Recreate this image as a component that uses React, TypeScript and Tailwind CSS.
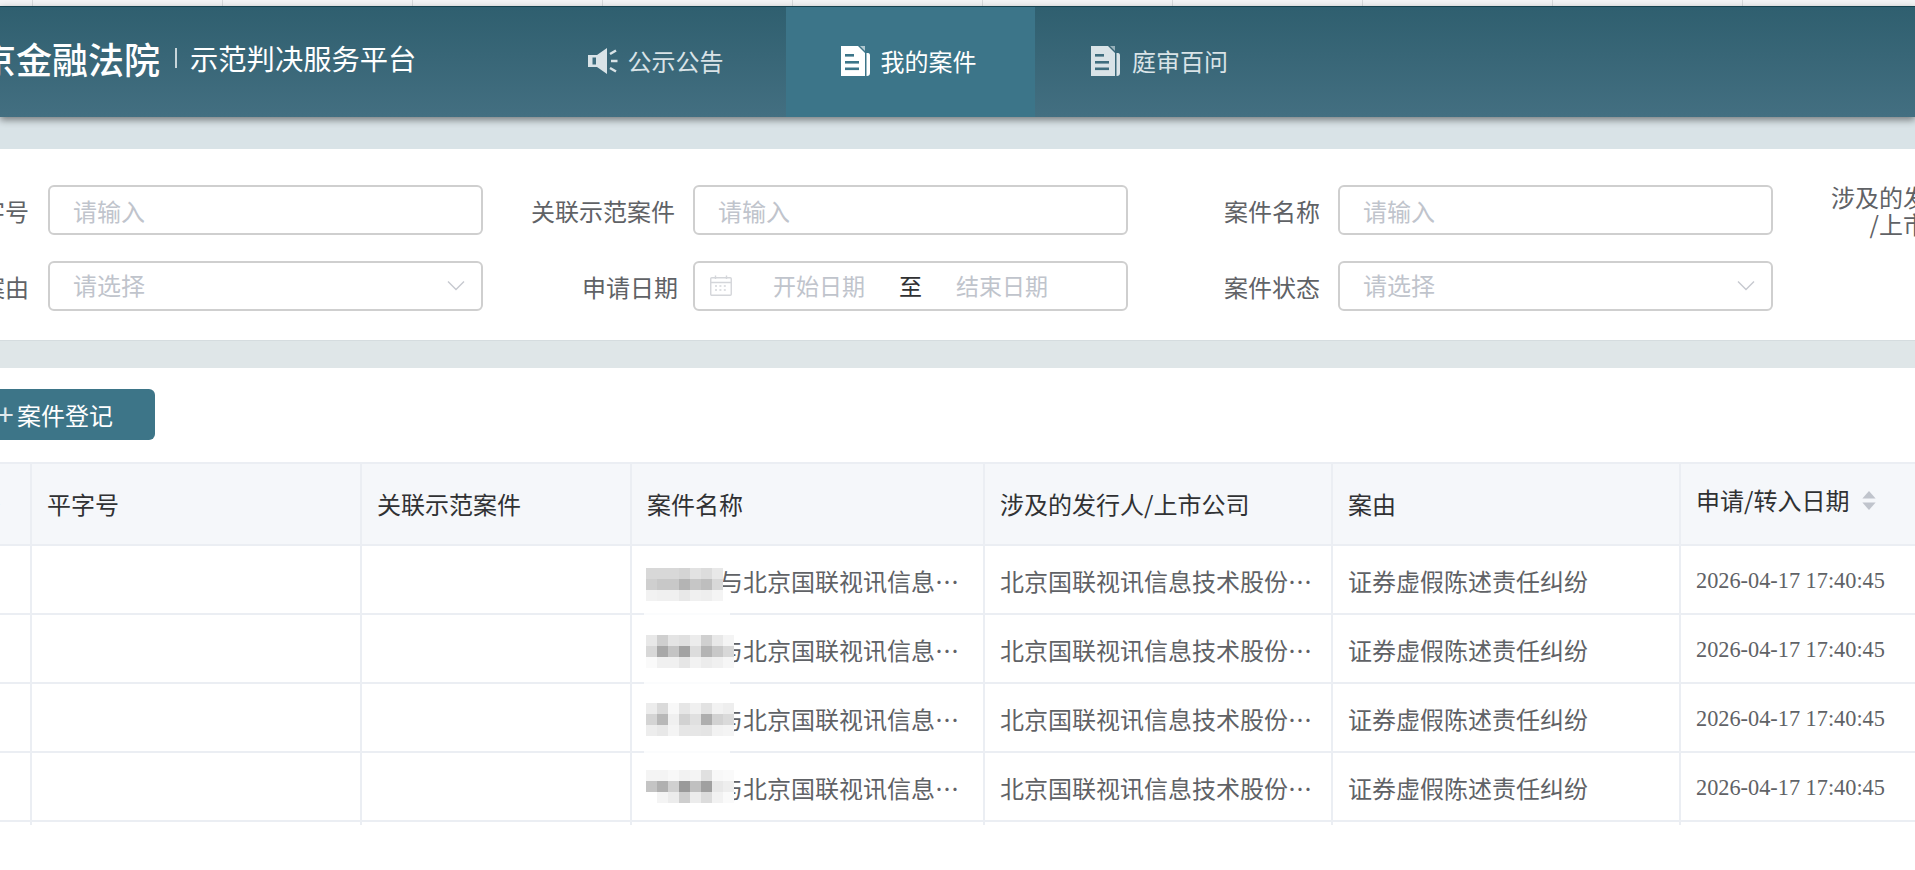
import React from "react";

const DocIcon = ({ fill, bar }: { fill: string; bar: string }) => (
  <svg width="29" height="30" viewBox="0 0 29 30" className="shrink-0">
    <path d="M0 0H17L24 7V30H0Z" fill={fill} />
    <path d="M19 0L24 5V0Z" fill={fill} opacity="0.6" />
    <path d="M25.5 7H27C28.3 7 29 8 29 9.5V27C29 28.8 27.8 30 26 30H25.5Z" fill={fill} />
    <rect x="4" y="8" width="9" height="2.6" fill={bar} />
    <rect x="4" y="15" width="14" height="2.6" fill={bar} />
    <rect x="4" y="21.5" width="14" height="2.6" fill={bar} />
  </svg>
);

const SpeakerIcon = () => (
  <svg width="30" height="26" viewBox="0 0 30 26" className="shrink-0">
    <path d="M0 7H9L19 0V26L9 19H0Z" fill="#d9e3e7" />
    <rect x="4.5" y="9.5" width="3.5" height="7" fill="#3e6d7e" />
    <path d="M22 6L28 2.5M23 13H29.5M22 20L28 23.5" stroke="#d9e3e7" strokeWidth="2.6" />
  </svg>
);

const Chevron = () => (
  <svg width="18" height="11" viewBox="0 0 18 11" fill="none" className="shrink-0">
    <path d="M1 1.5L9 9.5L17 1.5" stroke="#c6c9cf" strokeWidth="1.4" />
  </svg>
);

const CalendarIcon = () => (
  <svg width="22" height="21" viewBox="0 0 22 21" fill="none" className="shrink-0">
    <rect x="0.75" y="2.75" width="20.5" height="17.5" rx="1" stroke="#d4d6da" strokeWidth="1.4" />
    <path d="M1 7.5H21M5.5 0.5V4M16.5 0.5V4" stroke="#d4d6da" strokeWidth="1.4" />
    <path d="M5 11H17M5 15H17" stroke="#d4d6da" strokeWidth="1.6" strokeDasharray="2 2.4" />
  </svg>
);

const Field = ({ label, labelClass, children }: { label: React.ReactNode; labelClass: string; children?: React.ReactNode }) => (
  <div className="flex w-[645px] shrink-0 items-center">
    <div className={`${labelClass} shrink-0 text-right leading-[27px] text-[#606266]`}>{label}</div>
    {children}
  </div>
);

const TextInput = () => (
  <input
    placeholder="请输入"
    className="h-[50px] w-[435px] rounded-md border-2 border-[#cfcfcf] bg-white pl-[23px] pr-[22px] pt-[1px] text-[24px] outline-none placeholder:text-[#c0c4cc]"
  />
);

const Select = () => (
  <div className="flex h-[50px] w-[435px] items-center justify-between rounded-md border-2 border-[#cfcfcf] bg-white pb-[2px] pl-[23px] pr-[16px] text-[#c0c4cc]">
    <span>请选择</span>
    <Chevron />
  </div>
);

const DateRange = () => (
  <div className="flex h-[50px] w-[435px] items-center rounded-md border-2 border-[#cfcfcf] bg-white pb-[2px] pl-[15px] text-[23px] text-[#c0c4cc]">
    <CalendarIcon />
    <span className="ml-[41px]">开始日期</span>
    <span className="ml-[34px] text-[#303133]">至</span>
    <span className="ml-[34px]">结束日期</span>
  </div>
);

const mosaics: { rows: string[]; top: string; patch: boolean }[] = [
  {
    top: "top-[22px]",
    patch: false,
    rows: [
      "d8d8d8 d8d8d8 d8d8d8 d4d4d4 e2e2e2 dcdcdc e8e8e8 none",
      "cfcfcf c8c8c8 c8c8c8 b4b4b4 c6c6c6 bebebe d8d8d8 none",
      "f2f2f2 f0f0f0 f0f0f0 e8e8e8 f0f0f0 eeeeee f4f4f4 none",
    ],
  },
  {
    top: "top-[20px]",
    patch: true,
    rows: [
      "e8e8e8 cfcfcf e4e4e4 e0e0e0 ececec d0d0d0 e8e8e8 f4f4f4",
      "d8d8d8 a8a8a8 c4c4c4 a2a2a2 dcdcdc b4b4b4 c8c8c8 d8d8d8",
      "fafafa f0f0f0 f0f0f0 e6e6e6 f2f2f2 ececec f0f0f0 f6f6f6",
    ],
  },
  {
    top: "top-[19px]",
    patch: true,
    rows: [
      "ececec dadada f8f8f8 e6e6e6 f0f0f0 e2e2e2 f2f2f2 eeeeee",
      "d4d4d4 b8b8b8 f0f0f0 d2d2d2 e0e0e0 aeaeae d2d2d2 dadada",
      "ededed e8e8e8 f4f4f4 e6e6e6 e6e6e6 e4e4e4 f2f2f2 f4f4f4",
    ],
  },
  {
    top: "top-[17px]",
    patch: true,
    rows: [
      "f4f4f4 f4f4f4 f8f8f8 f2f2f2 f4f4f4 e0e0e0 f8f8f8 fafafa",
      "c4c4c4 b0b0b0 d0d0d0 9a9a9a c0c0c0 a0a0a0 e8e8e8 eeeeee",
      "ffffff f4f4f4 ececec cecece ececec dcdcdc f2f2f2 fafafa",
    ],
  },
];

const Mosaic = ({ rows, top }: { rows: string[]; top: string }) => (
  <div className={`absolute left-[14px] ${top} grid grid-cols-[repeat(8,11px)] grid-rows-[repeat(3,11px)]`}>
    {rows.flatMap((r, i) =>
      r.split(" ").map((c, j) => (
        <div key={`${i}-${j}`} style={{ backgroundColor: c === "none" ? "transparent" : `#${c}` }} />
      ))
    )}
  </div>
);

const headCell = "h-[84px] border-b-2 border-t-2 border-r-2 border-[#ebeef3] bg-[#f5f7fa] pl-[15px] pr-4 text-left font-normal text-[#303133]";
const bodyCell = "h-[69px] border-b-2 border-r-2 border-[#ebeef3] pl-[15px] pr-4 pt-[2px] text-[#606266]";
const tailCell = "h-[3px] border-r-2 border-[#ebeef3]";

export default function App() {
  return (
    <div className="h-[870px] w-[1915px] overflow-hidden bg-white font-['Noto_Sans_CJK_SC',sans-serif] text-[24px]">
      <div className="flex h-[6px] bg-[#f2f3f4] -ml-[157px]">
        {Array.from({ length: 11 }).map((_, i) => (
          <div key={i} className="w-[190px] shrink-0 border-r border-[#d8dadc]" />
        ))}
      </div>

      <header className="relative z-10 flex h-[111px] items-stretch border-t border-[#15424f] bg-gradient-to-b from-[#2f5f6f] to-[#436f81] text-white shadow-[0_3px_7px_rgba(0,0,0,0.45)]">
        <div className="flex w-[533px] shrink-0 items-center whitespace-nowrap -ml-[56px] box-content pr-[56px] pb-[8px]">
          <span className="text-[36px] font-medium">北京金融法院</span>
          <span className="ml-[15px] mr-[13px] h-[20px] w-[2px] bg-[#c7d5da]" />
          <span className="text-[28.3px]">示范判决服务平台</span>
        </div>
        <nav className="flex">
          <div className="flex w-[253px] items-center justify-center gap-[10px] pb-[3px] pr-[8px] text-[#d9e3e7]">
            <SpeakerIcon />
            <span>公示公告</span>
          </div>
          <div className="flex w-[249px] items-center justify-center gap-[11px] bg-[#3c7589] pb-[3px] pr-[4px] text-white">
            <DocIcon fill="#ffffff" bar="#3c7589" />
            <span>我的案件</span>
          </div>
          <div className="flex w-[251px] items-center justify-center gap-[12px] pb-[3px] pr-[2px] text-[#d9e3e7]">
            <DocIcon fill="#d9e3e7" bar="#3e6d7e" />
            <span>庭审百问</span>
          </div>
        </nav>
      </header>

      <div className="h-[32px] bg-[#d9e3e7]" />

      <section className="flex h-[191px] flex-col gap-[26px] pt-[36px] -ml-[143px] w-[2700px]">
        <div className="flex h-[50px]">
          <Field labelClass="w-[191px] pr-[19px]" label="平字号"><TextInput /></Field>
          <Field labelClass="w-[191px] pr-[18px]" label="关联示范案件"><TextInput /></Field>
          <Field labelClass="w-[191px] pr-[18px]" label="案件名称"><TextInput /></Field>
          <Field labelClass="w-[203px] pr-[20px]" label={<>涉及的发行人<br />/上市公司</>}><TextInput /></Field>
        </div>
        <div className="flex h-[50px]">
          <Field labelClass="w-[191px] pr-[19px]" label="案由"><Select /></Field>
          <Field labelClass="w-[191px] pr-[15px]" label="申请日期"><DateRange /></Field>
          <Field labelClass="w-[191px] pr-[18px]" label="案件状态"><Select /></Field>
        </div>
      </section>

      <div className="h-[28px] border-t border-[#d5dcdf] bg-[#dfe6e8]" />

      <div className="pt-[21px]">
        <button className="flex h-[51px] w-[185px] items-center justify-end rounded-md bg-[#3d7588] pr-[42px] text-white -ml-[30px]">
          <span className="mr-[3px] font-['Liberation_Sans',sans-serif] text-[30px] leading-none text-[#dfe9ec]">+</span>
          <span>案件登记</span>
        </button>
      </div>

      <div className="mt-[22px] w-[2049px] -ml-[68px]">
        <table className="w-[2049px] table-fixed border-separate border-spacing-0">
          <colgroup>
            <col className="w-[100px]" />
            <col className="w-[330px]" />
            <col className="w-[270px]" />
            <col className="w-[353px]" />
            <col className="w-[348px]" />
            <col className="w-[348px]" />
            <col className="w-[300px]" />
          </colgroup>
          <thead>
            <tr>
              <th className={`${headCell} text-right pr-[29px]`}>序号</th>
              <th className={headCell}>平字号</th>
              <th className={headCell}>关联示范案件</th>
              <th className={headCell}>案件名称</th>
              <th className={headCell}>涉及的发行人/上市公司</th>
              <th className={headCell}>案由</th>
              <th className={`${headCell} border-r-0`}>
                <span className="relative -top-[4px] flex items-center gap-[13px]">
                  申请/转入日期
                  <svg width="14" height="19" viewBox="0 0 14 20">
                    <path d="M7 0L14 8H0Z" fill="#c0c4cc" />
                    <path d="M7 20L14 12H0Z" fill="#c0c4cc" />
                  </svg>
                </span>
              </th>
            </tr>
          </thead>
          <tbody>
            {mosaics.map((m, i) => (
              <tr key={i}>
                <td className={bodyCell} />
                <td className={bodyCell} />
                <td className={bodyCell} />
                <td className={`${bodyCell} relative`}>
                  <div className="truncate">某某某与北京国联视讯信息技术股份有限公司</div>
                  {m.patch && <div className="absolute -top-[4px] left-[12px] h-[6px] w-[86px] bg-white/80" />}
                  <Mosaic rows={m.rows} top={m.top} />
                </td>
                <td className={bodyCell}><div className="truncate">北京国联视讯信息技术股份有限公司</div></td>
                <td className={bodyCell}><div className="truncate">证券虚假陈述责任纠纷</div></td>
                <td className={`${bodyCell} border-r-0 font-['Liberation_Serif',serif] text-[22.3px]`}>
                  <div className="truncate">2026-04-17 17:40:45</div>
                </td>
              </tr>
            ))}
            <tr>
              <td className={tailCell} />
              <td className={tailCell} />
              <td className={tailCell} />
              <td className={tailCell} />
              <td className={tailCell} />
              <td className={tailCell} />
              <td className="h-[3px]" />
            </tr>
          </tbody>
        </table>
      </div>
    </div>
  );
}
